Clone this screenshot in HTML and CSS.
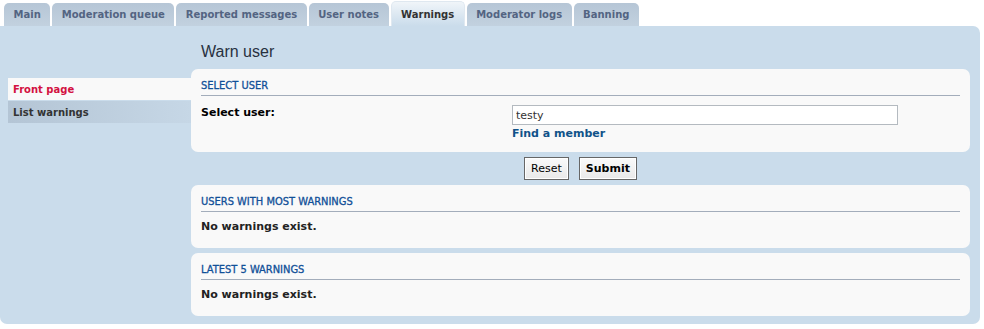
FILE: index.html
```html
<!DOCTYPE html>
<html lang="en">
  <head>
    <meta charset="UTF-8" />
    <title>Moderator Control Panel - Warnings</title>
    <link rel="stylesheet" href="styles.css">
  </head>
  <body>
    <div class="tabs">
      <a class="tab" href="#">Main</a>
      <a class="tab" href="#">Moderation queue</a>
      <a class="tab" href="#">Reported messages</a>
      <a class="tab" href="#">User notes</a>
      <a class="tab active" href="#">Warnings</a>
      <a class="tab" href="#">Moderator logs</a>
      <a class="tab" href="#">Banning</a>
    </div>

    <div class="panel-bg">
      <ul class="side-menu">
        <li class="active"><a href="#">Front page</a></li>
        <li><a href="#">List warnings</a></li>
      </ul>

      <div class="main">
        <h2>Warn user</h2>

        <div class="panel">
          <h3>Select user</h3>
          <dl class="field">
            <dt><label for="username">Select user:</label></dt>
            <dd>
              <input id="username" class="inputbox" type="text" value="testy" />
              <div><a class="find" href="#">Find a member</a></div>
            </dd>
          </dl>
        </div>

        <div class="submit-row">
          <button class="btn">Reset</button>
          <button class="btn bold">Submit</button>
        </div>

        <div class="panel">
          <h3>Users with most warnings</h3>
          <p class="empty">No warnings exist.</p>
        </div>

        <div class="panel">
          <h3>Latest 5 warnings</h3>
          <p class="empty">No warnings exist.</p>
        </div>
      </div>
    </div>
  </body>
</html>
```

FILE: styles.css
```css
body {
  margin: 0;
  background: #fff;
  font-family: "DejaVu Sans", Verdana, sans-serif;
  font-size: 11px;
  color: #000;
}

/* tabs */
.tabs {
  display: flex;
  align-items: flex-end;
  gap: 2px;
  height: 26px;
  padding-left: 4px;
}
.tab {
  display: block;
  height: 23px;
  line-height: 24px;
  padding: 0 9.5px;
  border-radius: 5px 5px 0 0;
  background: linear-gradient(#b6c6d6, #c2d1df);
  color: #536482;
  font-size: 10px;
  font-weight: bold;
  text-decoration: none;
}
.tab.active {
  height: 24px;
  line-height: 26px;
  border: 1px solid #dfe8f0;
  border-bottom: 0;
  background: linear-gradient(#f0f5f9, #cadceb);
  color: #333;
}

/* big blue panel */
.panel-bg {
  display: flex;
  width: 970px;
  background: #cadceb;
  border-radius: 0 7px 7px 7px;
  padding: 0 10px 8px 0;
}
.side-menu {
  list-style: none;
  margin: 52px 0 0;
  padding: 0 0 0 8px;
  width: 183px;
  flex-shrink: 0;
}
.side-menu li a {
  display: block;
  height: 22px;
  line-height: 23px;
  padding-left: 5px;
  font-size: 10px;
  font-weight: bold;
  text-decoration: none;
  color: #333;
  background: linear-gradient(to right, #b4c5d5, #c6d7e6);
  margin-top: 1px;
}
.side-menu li.active a {
  background: #f9f9f9;
  color: #d31141;
  margin-top: 0;
}

.main {
  flex: 1;
  display: flex;
  flex-direction: column;
  gap: 5px;
  padding-top: 16px;
}
.main h2 {
  margin: 0 0 2px 10px;
  font-family: "Liberation Sans", Arial, sans-serif;
  font-weight: normal;
  font-size: 16px;
  line-height: 20px;
  color: #28313f;
}

.panel {
  background: #f9f9f9;
  border-radius: 7px;
  padding: 9px 10px 11px;
}
.panel h3 {
  margin: 0;
  font-family: "DejaVu Sans Condensed", "Liberation Sans", sans-serif;
  font-size: 11px;
  line-height: 15px;
  font-weight: normal;
  text-transform: uppercase;
  color: #115098;
  padding-bottom: 2px;
  border-bottom: 1px solid #a3adbb;
  -webkit-text-stroke: 0.3px #115098;
}

.field {
  display: flex;
  margin: 9px 0 0;
}
.field dt {
  width: 311px;
}
.field dt label {
  font-weight: bold;
  line-height: 15px;
}
.field dd {
  margin: 0;
}
.inputbox {
  box-sizing: border-box;
  width: 386px;
  height: 20px;
  border: 1px solid #b4bac0;
  background: #fff;
  padding: 0 3px;
  font-family: "DejaVu Sans", Verdana, sans-serif;
  font-size: 11px;
  color: #333;
}
.find {
  display: inline-block;
  margin-top: 1px;
  line-height: 15px;
  font-weight: bold;
  color: #105289;
  text-decoration: none;
}

.submit-row {
  display: flex;
  justify-content: center;
  gap: 10px;
  height: 23px;
}
.btn {
  height: 23px;
  padding: 0 6px;
  border: 1px solid #666;
  background: linear-gradient(#fafafa, #e9e9e9);
  font-family: "DejaVu Sans", Verdana, sans-serif;
  font-size: 11px;
  color: #000;
  box-shadow: inset 0 0 0 1px #fff;
}
.btn.bold {
  font-weight: bold;
}

.empty {
  margin: 7px 0 3px;
  line-height: 15px;
  font-weight: bold;
  color: #222;
}
```
